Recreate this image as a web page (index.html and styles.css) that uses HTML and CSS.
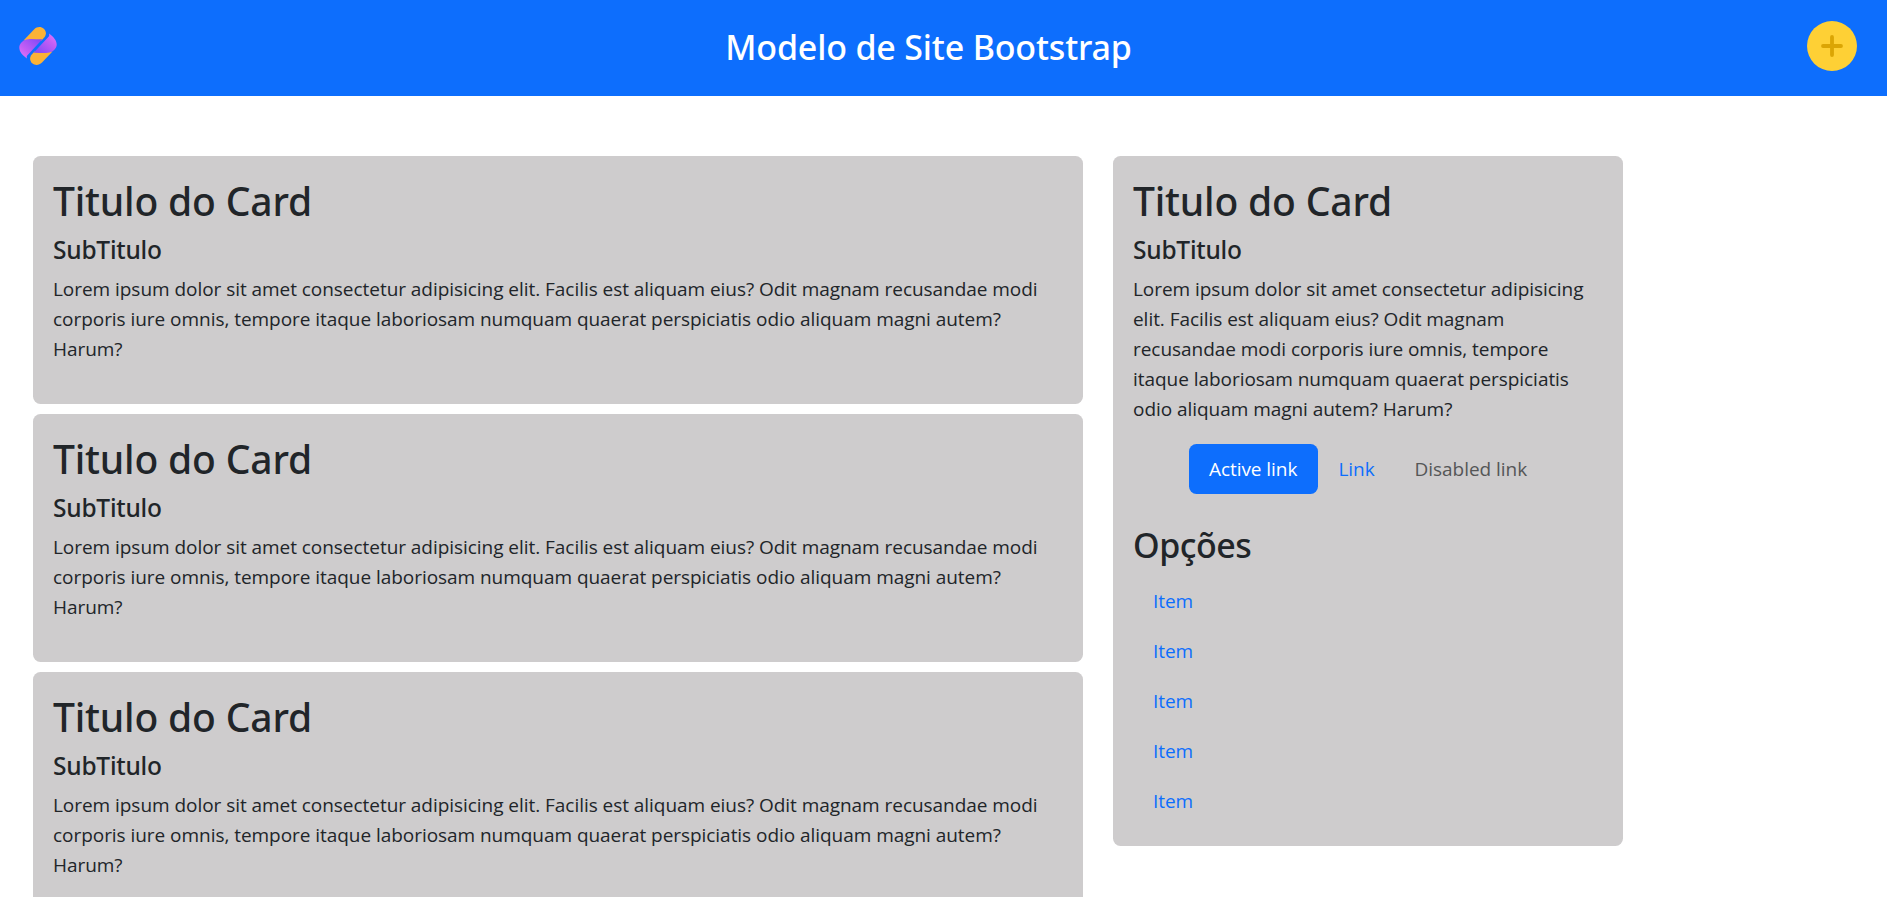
FILE: index.html
```html
<!DOCTYPE html>
<html lang="pt-BR">
<head>
<meta charset="utf-8">
<title>Modelo de Site Bootstrap</title>
<link rel="stylesheet" href="styles.css">
</head>
<body>
<header class="header">
  <svg class="logo" viewBox="0 0 38 38" aria-hidden="true">
    <defs>
      <linearGradient id="left" x1="0" y1="1" x2="1" y2="0"><stop offset="0" stop-color="#e879fb"/><stop offset=".35" stop-color="#c45ff5"/><stop offset="1" stop-color="#7c46f6"/></linearGradient>
      <linearGradient id="right" x1="1" y1="0" x2="0" y2="1"><stop offset="0" stop-color="#e879fb"/><stop offset=".35" stop-color="#c45ff5"/><stop offset="1" stop-color="#7c46f6"/></linearGradient>
    </defs>
    <path fill="#fbb236" d="M4.500 13.500 15 2.500C18-.5 22-.6 24.800 1.700 27.600 4.400 27.500 8 25 10.800L22.500 13.500Z"/>
    <path fill="url(#left)" d="M8 31.500C3.500 28 .3 25 .3 20.500.3 17 3 14.500 6 13 11 11 17 12.500 23.400 12.300L8.200 28.500Q7.300 29.500 8 31.500Z"/>
    <path fill="#fbb236" d="M33.500 24.500 23 35.500C20 38.500 16 38.600 13.200 36.300 10.400 33.600 10.500 30 13 27.200L15.500 24.500Z"/>
    <path fill="url(#right)" d="M30 6.500C34.500 10 37.700 13 37.700 17.500 37.700 21 35 23.500 32 25 27 27 21 25.500 14.600 25.700L29.800 9.500Q30.700 8.500 30 6.500Z"/>
  </svg>
  <h1 class="site-title">Modelo de Site Bootstrap</h1>
  <svg class="add" viewBox="0 0 50 50" aria-hidden="true">
    <circle cx="25" cy="25" r="25" fill="#fed035"/>
    <path d="M25 16V34M16 25H34" fill="none" stroke="#dba504" stroke-width="3.800" stroke-linecap="round"/>
  </svg>
</header>
<main class="content">
  <section class="posts">
    <article class="card">
      <h1 class="title">Titulo do Card</h1>
      <h4 class="subtitle">SubTitulo</h4>
      <p class="text">Lorem ipsum dolor sit amet consectetur adipisicing elit. Facilis est aliquam eius? Odit magnam recusandae modi corporis iure omnis, tempore itaque laboriosam numquam quaerat perspiciatis odio aliquam magni autem? Harum?</p>
    </article>
    <article class="card">
      <h1 class="title">Titulo do Card</h1>
      <h4 class="subtitle">SubTitulo</h4>
      <p class="text">Lorem ipsum dolor sit amet consectetur adipisicing elit. Facilis est aliquam eius? Odit magnam recusandae modi corporis iure omnis, tempore itaque laboriosam numquam quaerat perspiciatis odio aliquam magni autem? Harum?</p>
    </article>
    <article class="card">
      <h1 class="title">Titulo do Card</h1>
      <h4 class="subtitle">SubTitulo</h4>
      <p class="text">Lorem ipsum dolor sit amet consectetur adipisicing elit. Facilis est aliquam eius? Odit magnam recusandae modi corporis iure omnis, tempore itaque laboriosam numquam quaerat perspiciatis odio aliquam magni autem? Harum?</p>
    </article>
  </section>
  <aside class="card side">
    <h1 class="title">Titulo do Card</h1>
    <h4 class="subtitle">SubTitulo</h4>
    <p class="text">Lorem ipsum dolor sit amet consectetur adipisicing elit. Facilis est aliquam eius? Odit magnam recusandae modi corporis iure omnis, tempore itaque laboriosam numquam quaerat perspiciatis odio aliquam magni autem? Harum?</p>
    <nav class="pills">
      <a class="link active" href="#">Active link</a>
      <a class="link" href="#">Link</a>
      <a class="link disabled">Disabled link</a>
    </nav>
    <h2 class="options">Opções</h2>
    <nav class="items">
      <a class="link" href="#">Item</a>
      <a class="link" href="#">Item</a>
      <a class="link" href="#">Item</a>
      <a class="link" href="#">Item</a>
      <a class="link" href="#">Item</a>
    </nav>
  </aside>
</main>
</body>
</html>
```
FILE: styles.css
```css
* { box-sizing: border-box; }

body {
  margin: 0;
  height: 897px;
  overflow: hidden;
  background: #fff;
  color: #212529;
  font: 400 19px/30px "Open Sans", sans-serif;
  letter-spacing: -0.045px;
}

h1, h2, h4 {
  margin: 0;
  font-family: "Noto Sans", sans-serif;
  font-weight: 500;
}

.header {
  display: grid;
  grid-template-columns: 1fr auto 1fr;
  align-items: center;
  height: 96px;
  padding: 0 30px 4px 0;
  background: #0d6efd;
}

.logo { width: 38px; height: 38px; margin-left: 19px; }
.add { width: 50px; height: 50px; justify-self: end; }

.site-title {
  padding-top: 2px;
  color: #fff;
  font-size: 34px;
  line-height: 42px;
  letter-spacing: -0.18px;
}

.content {
  display: grid;
  grid-template-columns: 1050px 510px;
  align-items: start;
  gap: 30px;
  padding: 60px 0 0 33px;
}

.posts { display: grid; gap: 10px; }

.card {
  padding: 20px;
  border-radius: 7.5px;
  background: #cecccd;
}

.title {
  padding-top: 1px;
  margin-bottom: 10px;
  font-size: 39px;
  line-height: 48px;
  letter-spacing: -0.18px;
}

.subtitle {
  margin-bottom: 9px;
  font-size: 24.5px;
  line-height: 30px;
  letter-spacing: -0.22px;
}

.text { margin: 0 0 20px; }

.pills { display: flex; justify-content: center; }

.link {
  padding: 10px 20px;
  border-radius: 7.5px;
  color: #0d6efd;
  text-decoration: none;
}

.link.active { padding-right: 21px; background: #0d6efd; color: #fff; }
.link.disabled { color: #555657; }

.options {
  margin: 30px 0 10px;
  font-size: 34px;
  line-height: 42px;
  letter-spacing: -0.5px;
}

.items { display: flex; flex-direction: column; }
```
